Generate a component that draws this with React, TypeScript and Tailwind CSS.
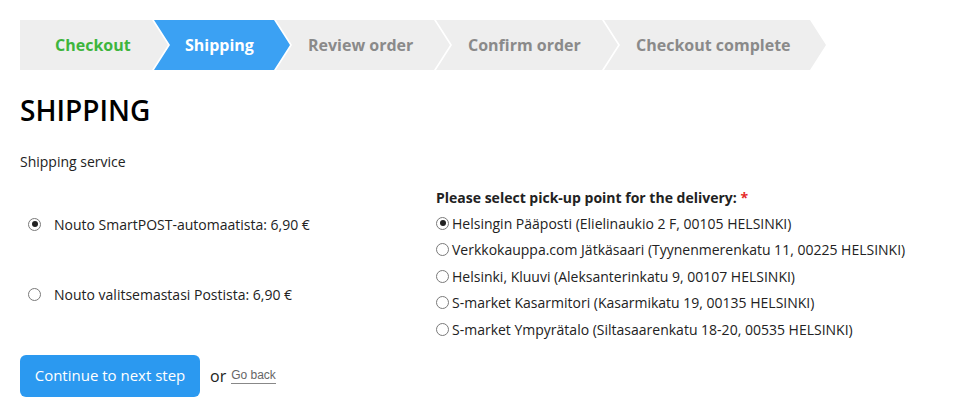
import React from "react";

type Step = { label: string; width: number; state: "done" | "active" | "todo" };

const steps: Step[] = [
  { label: "Checkout", width: 148, state: "done" },
  { label: "Shipping", width: 136, state: "active" },
  { label: "Review order", width: 174, state: "todo" },
  { label: "Confirm order", width: 182, state: "todo" },
  { label: "Checkout complete", width: 222, state: "todo" },
];

const services = [
  { label: "Nouto SmartPOST-automaatista: 6,90 €", checked: true },
  { label: "Nouto valitsemastasi Postista: 6,90 €", checked: false },
];

const points = [
  "Helsingin Pääposti (Elielinaukio 2 F, 00105 HELSINKI)",
  "Verkkokauppa.com Jätkäsaari (Tyynenmerenkatu 11, 00225 HELSINKI)",
  "Helsinki, Kluuvi (Aleksanterinkatu 9, 00107 HELSINKI)",
  "S-market Kasarmitori (Kasarmikatu 19, 00135 HELSINKI)",
  "S-market Ympyrätalo (Siltasaarenkatu 18-20, 00535 HELSINKI)",
];

function Radio({ checked }: { checked: boolean }) {
  return (
    <span className="flex h-[13px] w-[13px] shrink-0 items-center justify-center rounded-full border border-[#7a7a7a] bg-white">
      {checked && <span className="h-[6px] w-[6px] rounded-full bg-[#222]" />}
    </span>
  );
}

export default function App() {
  return (
    <div className="min-h-[417px] bg-white px-5 pt-5 font-['Open_Sans',sans-serif] text-[#222]">
      {/* steps */}
      <div className="flex h-[50px]">
        {steps.map((s, i) => (
          <div
            key={s.label}
            style={{ width: s.width }}
            className={
              (i === 0
                ? "pl-[35px] [clip-path:polygon(0_0,calc(100%_-_16px)_0,100%_50%,calc(100%_-_16px)_100%,0_100%)] "
                : "-ml-[14px] [clip-path:polygon(0_0,calc(100%_-_16px)_0,100%_50%,calc(100%_-_16px)_100%,0_100%,16px_50%)] ") +
              (i === 1 ? "pl-[31px] " : i > 1 ? "pl-[32px] " : "") +
              "flex shrink-0 items-center text-[16px] font-bold " +
              (s.state === "active"
                ? "bg-[#3ba1f3] text-white"
                : s.state === "done"
                ? "bg-[#eeeeee] text-[#3db53d]"
                : "bg-[#eeeeee] text-[#8a8a8a]")
            }
          >
            {s.label}
          </div>
        ))}
      </div>

      <h1 className="mt-[22px] text-[28px] font-semibold leading-[36px] text-black">SHIPPING</h1>

      <div className="mt-[24px] text-[14px] leading-[20px]">Shipping service</div>

      <div className="mt-[14px] flex">
        <div className="flex w-[416px] flex-col gap-[44px] pt-[25px]">
          {services.map((s) => (
            <label key={s.label} className="flex h-[26px] items-center gap-[13px] pl-[8px] text-[14px]">
              <Radio checked={s.checked} />
              {s.label}
            </label>
          ))}
        </div>

        <div className="text-[14px]">
          <div className="h-[24px] font-bold leading-[24px]">
            Please select pick-up point for the delivery: <span className="text-[#e52a2a]">*</span>
          </div>
          {points.map((p, i) => (
            <label key={p} className="flex h-[26.5px] items-center gap-[3px]">
              <Radio checked={i === 0} />
              {p}
            </label>
          ))}
        </div>
      </div>

      <div className="mt-[12px] flex items-center">
        <button className="h-[42px] w-[180px] rounded-[6px] bg-[#2b99f0] text-[15px] text-white">
          Continue to next step
        </button>
        <span className="ml-[10px] text-[16px]">or</span>
        <a className="ml-[5px] border-b border-[#888] font-['Liberation_Sans',Arial,sans-serif] text-[12px] leading-[16px] text-[#666]">
          Go back
        </a>
      </div>
    </div>
  );
}
